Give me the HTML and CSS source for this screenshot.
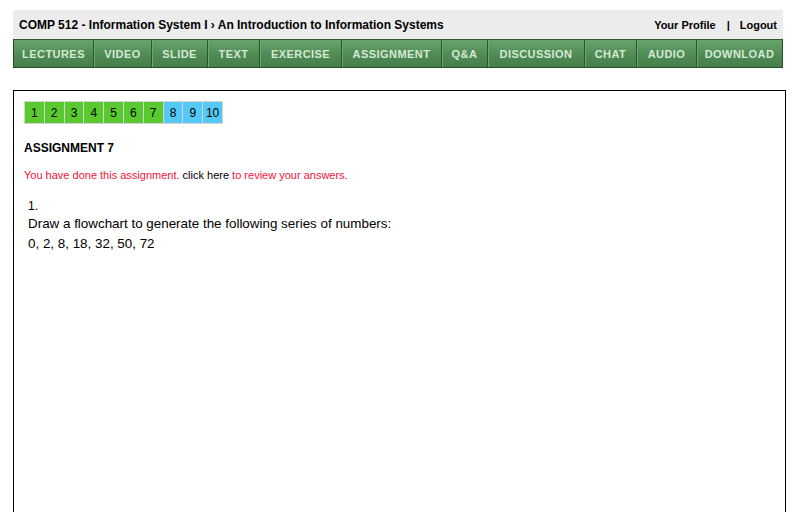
FILE: index.html
```html
<!DOCTYPE html>
<html>
<head>
<meta charset="utf-8">
<link rel="stylesheet" href="styles.css">
</head>
<body>
<div class="page">
  <div class="topbar">
    <div class="title">COMP 512 - Information System I › An Introduction to Information Systems</div>
    <div class="account"><a href="#">Your Profile</a><span class="sep">|</span><a href="#">Logout</a></div>
  </div>
  <nav class="nav">
    <a href="#">LECTURES</a><a href="#">VIDEO</a><a href="#">SLIDE</a><a href="#">TEXT</a><a href="#">EXERCISE</a><a href="#">ASSIGNMENT</a><a href="#">Q&amp;A</a><a href="#">DISCUSSION</a><a href="#">CHAT</a><a href="#">AUDIO</a><a href="#" class="last">DOWNLOAD</a>
  </nav>
  <div class="content">
    <div class="pager">
      <span class="done">1</span><span class="done">2</span><span class="done">3</span><span class="done">4</span><span class="done">5</span><span class="done">6</span><span class="done">7</span><span class="todo">8</span><span class="todo">9</span><span class="todo">10</span>
    </div>
    <h2 class="heading">ASSIGNMENT 7</h2>
    <p class="notice">You have done this assignment. <a href="#">click here</a> to review your answers.</p>
    <div class="question">
      <div class="qnum">1.</div>
      <div class="qtext">Draw a flowchart to generate the following series of numbers:</div>
      <div class="qtext">0, 2, 8, 18, 32, 50, 72</div>
    </div>
  </div>
</div>
</body>
</html>
```
FILE: styles.css
```css
* { box-sizing: border-box; }
html, body { margin: 0; padding: 0; background: #fff; }
body { font-family: "Liberation Sans", Arial, sans-serif; color: #000; }
.page { padding: 10px 11px 0 13px; }
.topbar {
  width: 770px;
  height: 29px;
  background: #ececec;
  display: flex;
  justify-content: space-between;
  align-items: center;
  padding: 0 6px 0 6px;
  font-size: 12px;
  font-weight: bold;
}
.title { padding-top: 1px; }
.account { padding-top: 1px; font-size: 11px; }
.account a { color: #000; text-decoration: none; }
.account .sep { margin: 0 10px 0 11px; font-weight: bold; }
.nav {
  width: 770px;
  height: 29px;
  display: flex;
  background: linear-gradient(#5e9a62, #3f7a45);
  border: 1px solid #254f29;
  border-top-color: #2d5d31;
}
.nav a {
  display: flex;
  align-items: center;
  justify-content: center;
  color: #d6e8d6;
  text-decoration: none;
  font-size: 11px;
  font-weight: bold;
  letter-spacing: 0.45px;
  border-right: 1px solid #2a562e;
  box-shadow: inset 1px 0 0 #6ea872;
  background: linear-gradient(#68a56c 0%, #4f8b54 55%, #457f4a 100%);
}
.nav a:nth-child(1) { width: 80px; box-shadow: none; }
.nav a:nth-child(2) { width: 58px; }
.nav a:nth-child(3) { width: 56px; }
.nav a:nth-child(4) { width: 52px; }
.nav a:nth-child(5) { width: 82px; }
.nav a:nth-child(6) { width: 100px; }
.nav a:nth-child(7) { width: 46px; }
.nav a:nth-child(8) { width: 97px; }
.nav a:nth-child(9) { width: 52px; }
.nav a:nth-child(10) { width: 60px; }
.nav a.last { flex: 1; border-right: none; }
.content {
  margin-top: 22px;
  width: 773px;
  height: 450px;
  border: 1px solid #000;
  border-bottom: none;
  padding: 10px 10px 0 10px;
}
.pager { display: flex; }
.pager span {
  width: 20.8px;
  height: 23px;
  border: 1px solid #d4d4d4;
  margin-right: -1px;
  display: flex;
  align-items: center;
  justify-content: center;
  font-size: 12px;
  color: #000;
}
.pager .done { background: #58c92e; }
.pager .todo { background: #55c9f6; }
.heading {
  font-size: 12px;
  font-weight: bold;
  margin: 17px 0 0 0;
  line-height: 14px;
}
.notice {
  margin: 13px 0 0 0;
  font-size: 11px;
  color: #f0143c;
  line-height: 14px;
}
.notice a { color: #000; text-decoration: none; }
.question { margin-top: 17px; padding-left: 4px; }
.qnum { font-size: 12px; line-height: 15px; }
.qtext { font-size: 13.4px; line-height: 20px; }
```
